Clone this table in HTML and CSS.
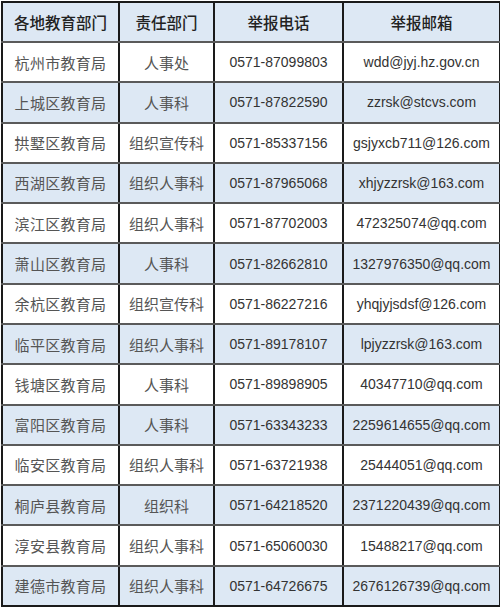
FILE: index.html
```html
<!DOCTYPE html>
<html lang="zh">
<head>
<meta charset="utf-8">
<link rel="stylesheet" href="styles.css">
</head>
<body>
<div class="wrap">
<table class="tbl">
  <colgroup>
    <col class="c1"><col class="c2"><col class="c3"><col class="c4">
  </colgroup>
  <thead>
    <tr class="hd"><th>各地教育部门</th><th>责任部门</th><th>举报电话</th><th>举报邮箱</th></tr>
  </thead>
  <tbody>
    <tr><td class="org">杭州市教育局</td><td class="dep">人事处</td><td class="num">0571-87099803</td><td class="num">wdd@jyj.hz.gov.cn</td></tr>
    <tr class="alt"><td class="org">上城区教育局</td><td class="dep">人事科</td><td class="num">0571-87822590</td><td class="num">zzrsk@stcvs.com</td></tr>
    <tr><td class="org">拱墅区教育局</td><td class="dep">组织宣传科</td><td class="num">0571-85337156</td><td class="num">gsjyxcb711@126.com</td></tr>
    <tr class="alt"><td class="org">西湖区教育局</td><td class="dep">组织人事科</td><td class="num">0571-87965068</td><td class="num">xhjyzzrsk@163.com</td></tr>
    <tr><td class="org">滨江区教育局</td><td class="dep">组织人事科</td><td class="num">0571-87702003</td><td class="num">472325074@qq.com</td></tr>
    <tr class="alt"><td class="org">萧山区教育局</td><td class="dep">人事科</td><td class="num">0571-82662810</td><td class="num">1327976350@qq.com</td></tr>
    <tr><td class="org">余杭区教育局</td><td class="dep">组织宣传科</td><td class="num">0571-86227216</td><td class="num">yhqjyjsdsf@126.com</td></tr>
    <tr class="alt"><td class="org">临平区教育局</td><td class="dep">组织人事科</td><td class="num">0571-89178107</td><td class="num">lpjyzzrsk@163.com</td></tr>
    <tr><td class="org">钱塘区教育局</td><td class="dep">人事科</td><td class="num">0571-89898905</td><td class="num">40347710@qq.com</td></tr>
    <tr class="alt"><td class="org">富阳区教育局</td><td class="dep">人事科</td><td class="num">0571-63343233</td><td class="num">2259614655@qq.com</td></tr>
    <tr><td class="org">临安区教育局</td><td class="dep">组织人事科</td><td class="num">0571-63721938</td><td class="num">25444051@qq.com</td></tr>
    <tr class="alt"><td class="org">桐庐县教育局</td><td class="dep">组织科</td><td class="num">0571-64218520</td><td class="num">2371220439@qq.com</td></tr>
    <tr><td class="org">淳安县教育局</td><td class="dep">组织人事科</td><td class="num">0571-65060030</td><td class="num">15488217@qq.com</td></tr>
    <tr class="alt"><td class="org">建德市教育局</td><td class="dep">组织人事科</td><td class="num">0571-64726675</td><td class="num">2676126739@qq.com</td></tr>
  </tbody>
</table>
</div>
</body>
</html>
```
FILE: styles.css
```css
html, body {
  margin: 0;
  padding: 0;
  background: #ffffff;
}
.wrap {
  padding: 1px 1px 0 1px;
}
.tbl {
  width: 498px;
  height: 606px;
  border-collapse: collapse;
  table-layout: fixed;
  font-family: "Noto Sans CJK SC", sans-serif;
}
.c1 { width: 117px; }
.c2 { width: 95px; }
.c3 { width: 129px; }
.c4 { width: 157px; }
.tbl th, .tbl td {
  border-left: 2px solid #1a1a1a;
  border-right: 2px solid #1a1a1a;
  border-top: 2px solid #5a5a5a;
  border-bottom: 2px solid #5a5a5a;
  text-align: center;
  vertical-align: middle;
  padding: 0;
  height: 38px;
  white-space: nowrap;
}
.tbl thead th {
  border-top: 2px solid #1a1a1a;
}
.tbl tbody tr:last-child td {
  border-bottom: 2px solid #1a1a1a;
}
.hd {
  background: #dde8f4;
}
.hd th {
  font-size: 15.5px;
  font-weight: 500;
  color: #222;
}
.alt {
  background: #dde8f4;
}
.org {
  font-size: 15px;
  color: #555;
  letter-spacing: 0.3px;
}
.dep {
  font-size: 15px;
  color: #555;
}
.num {
  font-family: "Liberation Sans", Arial, sans-serif;
  font-size: 14px;
  color: #333;
}
```
